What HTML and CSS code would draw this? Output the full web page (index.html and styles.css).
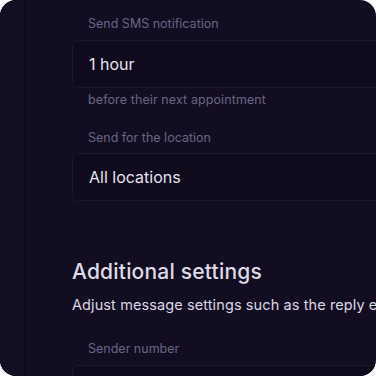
FILE: index.html
```html
<!DOCTYPE html>
<html>
<head>
<meta charset="utf-8">
<link rel="stylesheet" href="styles.css">
</head>
<body>
<div class="card">
  <div class="rail"></div>
  <main class="main">
    <div class="field">
      <div class="label">Send SMS notification</div>
      <div class="input">1 hour</div>
      <div class="helper">before their next appointment</div>
    </div>
    <div class="field field-2">
      <div class="label">Send for the location</div>
      <div class="input input-2">All locations</div>
    </div>
    <h2 class="heading">Additional settings</h2>
    <p class="sub">Adjust message settings such as the reply email address and sender number.</p>
    <div class="field field-3">
      <div class="label">Sender number</div>
      <div class="input"></div>
    </div>
  </main>
</div>
</body>
</html>
```

FILE: styles.css
```css
* { box-sizing: border-box; }
html, body { margin: 0; padding: 0; background: #ffffff; }
body { width: 376px; height: 376px; overflow: hidden; font-family: Inter, "Noto Sans", sans-serif; }
.card {
  width: 376px; height: 376px;
  border-radius: 16px;
  background: #130d22;
  overflow: hidden;
  display: flex;
}
.rail {
  flex: 0 0 25px;
  border-right: 1px solid #0d0818;
  background: #140e23;
}
.main {
  flex: 1;
  padding: 16px 0 0 47px;
  min-width: 0;
  white-space: nowrap;
}
.label {
  padding-left: 16px;
  font-size: 12.5px;
  line-height: 16px;
  color: #676783;
  margin-bottom: 8px;
}
.input {
  width: 420px;
  height: 48px;
  border: 1px solid #1d1630;
  border-radius: 6px;
  background: #100a1d;
  padding-left: 16px;
  font-size: 16px;
  line-height: 46px;
  color: #e6e4ef;
}
.helper {
  padding-left: 16px;
  margin-top: 4px;
  font-size: 12.5px;
  line-height: 16px;
  letter-spacing: 0.1px;
  color: #676783;
}
.field-2 { margin-top: 22px; }
.field-2 .label { margin-bottom: 7px; }
.heading {
  margin: 57px 0 0;
  font-size: 21px;
  line-height: 28px;
  font-weight: 500;
  letter-spacing: 0.2px;
  color: #dedce8;
}
.sub {
  margin: 9px 0 0;
  font-size: 14.5px;
  line-height: 20px;
  letter-spacing: 0.1px;
  color: #dad8e4;
}
.field-3 { margin-top: 26px; }
```
